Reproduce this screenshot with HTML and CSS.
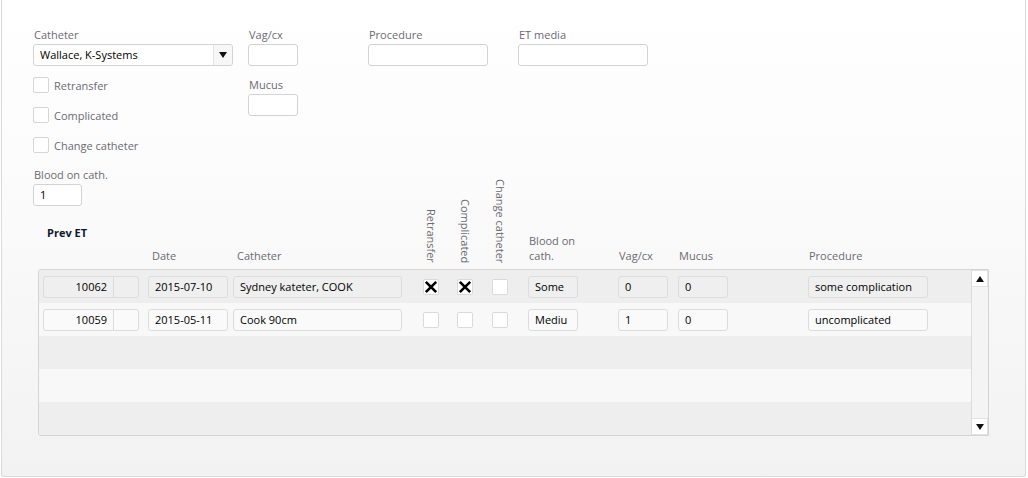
FILE: index.html
```html
<!DOCTYPE html>
<html lang="en">
<head>
  <meta charset="UTF-8" />
  <title>ET</title>
  <link rel="stylesheet" href="styles.css">
</head>
<body>
  <div class="panel">

    <div class="form">
      <div class="col col-catheter">
        <label class="lbl">Catheter</label>
        <div class="combo">
          <span class="combo-value">Wallace, K-Systems</span>
          <span class="combo-btn"><span class="arrow-down"></span></span>
        </div>
        <div class="checks">
          <div class="check-row"><span class="box"></span><span class="check-lbl">Retransfer</span></div>
          <div class="check-row"><span class="box"></span><span class="check-lbl">Complicated</span></div>
          <div class="check-row"><span class="box"></span><span class="check-lbl">Change catheter</span></div>
        </div>
        <label class="lbl lbl-blood">Blood on cath.</label>
        <div class="input input-blood">1</div>
      </div>

      <div class="col col-vag">
        <label class="lbl">Vag/cx</label>
        <div class="input"></div>
        <label class="lbl lbl-mucus">Mucus</label>
        <div class="input"></div>
      </div>

      <div class="col col-proc">
        <label class="lbl">Procedure</label>
        <div class="input"></div>
      </div>

      <div class="col col-media">
        <label class="lbl">ET media</label>
        <div class="input"></div>
      </div>
    </div>

    <div class="prev-title">Prev ET</div>

    <div class="head">
      <div class="c-id"></div>
      <div class="c-date h-lbl">Date</div>
      <div class="c-cath h-lbl">Catheter</div>
      <div class="c-chk c-chk1"><span class="v-lbl">Retransfer</span></div>
      <div class="c-chk c-chk2"><span class="v-lbl">Complicated</span></div>
      <div class="c-chk c-chk3"><span class="v-lbl">Change catheter</span></div>
      <div class="c-blood h-lbl">Blood on<br>cath.</div>
      <div class="c-vag h-lbl">Vag/cx</div>
      <div class="c-mucus h-lbl">Mucus</div>
      <div class="c-proc h-lbl">Procedure</div>
    </div>

    <div class="table">
      <div class="rows">
        <div class="row">
          <div class="c-id"><span class="cell cell-id">10062</span><span class="cell cell-extra"></span></div>
          <div class="c-date cell">2015-07-10</div>
          <div class="c-cath cell">Sydney kateter, COOK</div>
          <div class="c-chk c-chk1"><span class="box"><svg viewBox="0 0 16 16" width="16" height="16"><path d="M2.8 2.8 L13.2 13.2 M13.2 2.8 L2.8 13.2" stroke="#000" stroke-width="2.6" fill="none"/></svg></span></div>
          <div class="c-chk c-chk2"><span class="box"><svg viewBox="0 0 16 16" width="16" height="16"><path d="M2.8 2.8 L13.2 13.2 M13.2 2.8 L2.8 13.2" stroke="#000" stroke-width="2.6" fill="none"/></svg></span></div>
          <div class="c-chk c-chk3"><span class="box"></span></div>
          <div class="c-blood cell">Some</div>
          <div class="c-vag cell">0</div>
          <div class="c-mucus cell">0</div>
          <div class="c-proc cell">some complication</div>
        </div>
        <div class="row">
          <div class="c-id"><span class="cell cell-id">10059</span><span class="cell cell-extra"></span></div>
          <div class="c-date cell">2015-05-11</div>
          <div class="c-cath cell">Cook 90cm</div>
          <div class="c-chk c-chk1"><span class="box"></span></div>
          <div class="c-chk c-chk2"><span class="box"></span></div>
          <div class="c-chk c-chk3"><span class="box"></span></div>
          <div class="c-blood cell">Mediu</div>
          <div class="c-vag cell">1</div>
          <div class="c-mucus cell">0</div>
          <div class="c-proc cell">uncomplicated</div>
        </div>
        <div class="row"></div>
        <div class="row"></div>
        <div class="row"></div>
      </div>
      <div class="scrollbar">
        <span class="sb-btn"><span class="arrow-up"></span></span>
        <span class="sb-btn"><span class="arrow-down"></span></span>
      </div>
    </div>

  </div>
</body>
</html>
```

FILE: styles.css
```css
* {
  box-sizing: border-box;
  margin: 0;
  padding: 0;
}

body {
  margin: 0;
  background: #ffffff;
  font-family: "Open Sans", "Noto Sans", sans-serif;
  font-size: 11px;
  color: #000;
  overflow: hidden;
}

.panel {
  margin: -3px 2px 0 1px;
  height: 480px;
  border: 1px solid #dadada;
  border-top: none;
  border-radius: 0 0 3px 3px;
  background: linear-gradient(#ffffff 0%, #fbfbfb 40%, #f2f2f2 100%);
  padding: 31px 0 0 31px;
}

/* top form */
.form {
  display: flex;
  align-items: flex-start;
}

.col {
  display: flex;
  flex-direction: column;
}

.col-catheter { width: 200px; }
.col-vag { width: 50px; margin-left: 15px; }
.col-proc { width: 120px; margin-left: 70px; }
.col-media { width: 130px; margin-left: 30px; }

.lbl {
  display: block;
  height: 16px;
  line-height: 14px;
  color: #6b6b73;
  padding-left: 1px;
}

.input {
  height: 22px;
  background: #fff;
  border: 1px solid #d3d3d3;
  border-radius: 3px;
  line-height: 20px;
  padding-left: 6px;
}

.combo {
  height: 22px;
  display: flex;
  background: #fff;
  border: 1px solid #d3d3d3;
  border-radius: 3px;
}

.combo-value {
  flex: 1;
  line-height: 20px;
  padding-left: 6px;
}

.combo-btn {
  width: 19px;
  border-left: 1px solid #e3e3e3;
  background: #f7f7f7;
  border-radius: 0 3px 3px 0;
  display: flex;
  align-items: center;
  justify-content: center;
}

.arrow-down {
  width: 0;
  height: 0;
  border-left: 4px solid transparent;
  border-right: 4px solid transparent;
  border-top: 6px solid #111;
}

.arrow-up {
  width: 0;
  height: 0;
  border-left: 4px solid transparent;
  border-right: 4px solid transparent;
  border-bottom: 6px solid #111;
}

.checks {
  display: flex;
  flex-direction: column;
  gap: 14px;
  margin-top: 11px;
}

.check-row {
  display: flex;
  align-items: center;
  height: 16px;
}

.box {
  display: inline-block;
  width: 16px;
  height: 16px;
  background: #fff;
  border: 1px solid #d6d6d6;
  border-radius: 2px;
  position: relative;
}

.box svg {
  position: absolute;
  left: -1px;
  top: -1px;
}

.check-lbl {
  margin-left: 5px;
  color: #6b6b73;
}

.lbl-blood { margin-top: 15px; }
.input-blood { width: 49px; }
.lbl-mucus { margin-top: 12px; }

/* prev ET table */
.prev-title {
  margin: 19px 0 0 14px;
  font-weight: bold;
  color: #0c1830;
  line-height: 16px;
}

.head {
  display: flex;
  align-items: flex-end;
  padding-left: 10px;
  margin-top: -68px;
  height: 96px;
  padding-bottom: 6px;
}

.h-lbl {
  color: #6b6b73;
  line-height: 15px;
}

.v-lbl {
  writing-mode: vertical-rl;
  color: #6b6b73;
  line-height: 16px;
  display: block;
}

.c-id { width: 96px; display: flex; }
.c-date { width: 80px; margin-left: 9px; }
.c-cath { width: 169px; margin-left: 5px; }
.c-chk { width: 16px; display: flex; justify-content: center; }
.c-chk1 { margin-left: 21px; }
.c-chk2 { margin-left: 18px; }
.c-chk3 { margin-left: 19px; }
.c-blood { width: 50px; margin-left: 20px; }
.c-vag { width: 50px; margin-left: 40px; }
.c-mucus { width: 50px; margin-left: 10px; }
.c-proc { width: 120px; margin-left: 80px; }

.head .c-date, .head .c-cath { padding-left: 4px; }
.head .c-blood, .head .c-vag, .head .c-mucus, .head .c-proc { padding-left: 1px; }

.table {
  display: flex;
  width: 951px;
  height: 167px;
  margin-left: 5px;
  border: 1px solid #d4d4d4;
  border-radius: 3px 0 0 3px;
  overflow: hidden;
}

.rows {
  flex: 1;
  display: flex;
  flex-direction: column;
}

.row {
  height: 33px;
  flex-shrink: 0;
  display: flex;
  align-items: center;
  padding-left: 4px;
  background: #eeeeee;
}

.row:nth-child(even) {
  background: #f8f8f8;
}

.cell {
  height: 22px;
  line-height: 20px;
  border: 1px solid #dcdcdc;
  border-radius: 3px;
  background: #efefef;
  padding-left: 6px;
  white-space: nowrap;
  overflow: hidden;
}

.row:nth-child(even) .cell {
  background: #fafafa;
}

.cell-id {
  width: 71px;
  text-align: right;
  padding: 0 6px 0 0;
  border-radius: 3px 0 0 3px;
}

.cell-extra {
  width: 26px;
  margin-left: -1px;
  border-radius: 0 3px 3px 0;
}

.row .c-chk .box {
  border-color: #dadada;
}

.scrollbar {
  width: 17px;
  background: #f4f4f4;
  border-left: 1px solid #dcdcdc;
  display: flex;
  flex-direction: column;
  justify-content: space-between;
}

.sb-btn {
  height: 17px;
  background: #fff;
  border: 1px solid #e2e2e2;
  border-left: none;
  display: flex;
  align-items: center;
  justify-content: center;
}
```
